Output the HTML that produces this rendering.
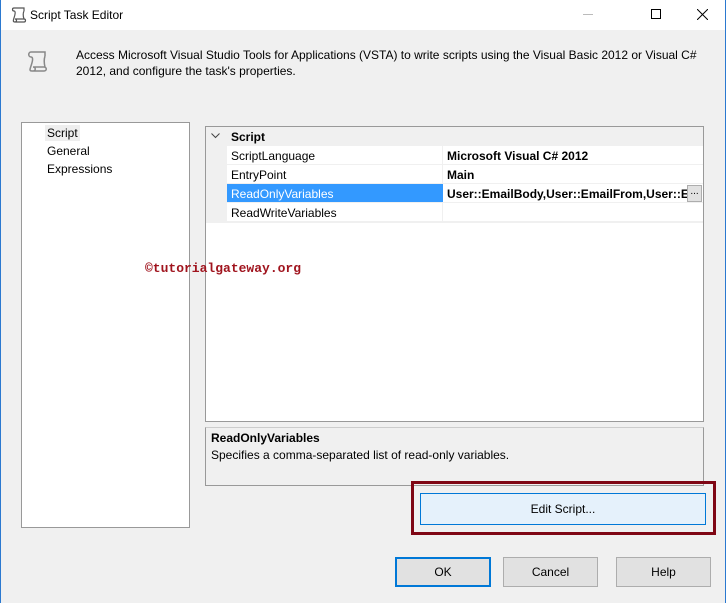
<!DOCTYPE html><html><head><style>
*{margin:0;padding:0;box-sizing:border-box}
body{width:726px;height:603px;background:#f0f0f0;font-family:"Liberation Sans",sans-serif;font-size:12px;color:#000;position:relative;overflow:hidden}
.a{position:absolute}
.t{white-space:nowrap}
.btn{position:absolute;background:#e1e1e1;border:1px solid #adadad;text-align:center;line-height:28px;font-size:12px}
</style></head><body>
<div class="a" style="left:0;top:0;width:1px;height:603px;background:#2b79d0"></div>
<div class="a" style="left:725px;top:0;width:1px;height:603px;background:#2b79d0"></div>
<div class="a" style="left:1px;top:0;width:724px;height:30px;background:#fff"></div>
<svg class="a" style="left:9px;top:6px" width="18" height="18" viewBox="0 0 18 18"><path d="M5 2h10v3M5 2c-2 0-2 3 0 3s1 4 0 7-1 4 1 4h9c2 0 2-3 0-3M6 16c2 0 2-3 0-3h9c-1-3-1-6 0-8" fill="none" stroke="#555" stroke-width="1.2"/></svg>
<div class="a t" style="left:30px;top:8px;font-size:12px">Script Task Editor</div>
<div class="a" style="left:583px;top:14px;width:10px;height:1px;background:#bbb"></div>
<div class="a" style="left:651px;top:9px;width:10px;height:10px;border:1px solid #000"></div>
<svg class="a" style="left:697px;top:9px" width="11" height="11"><path d="M0 0L11 11M11 0L0 11" stroke="#000" stroke-width="1"/></svg>
<svg class="a" style="left:25px;top:50px" width="24" height="24" viewBox="0 0 24 24"><path d="M6 2h14v4M6 2c-3 0-3 5 0 5s1 6 0 9-2 5 1 5h12c3 0 3-4 0-4M8 21c3 0 3-4 0-4h12c-1-4-1-8 0-11" fill="none" stroke="#888" stroke-width="1.5"/></svg>
<div class="a" style="left:76px;top:47px;line-height:16px;width:645px">Access Microsoft Visual Studio Tools for Applications (VSTA) to write scripts using the Visual Basic 2012 or Visual C# 2012, and configure the task's properties.</div>
<div class="a" style="left:21px;top:122px;width:169px;height:406px;background:#fff;border:1px solid #999"></div>
<div class="a t" style="left:45px;top:125px;background:#eee;padding:0 2px;line-height:16px">Script</div>
<div class="a t" style="left:47px;top:143px;line-height:16px">General</div>
<div class="a t" style="left:47px;top:161px;line-height:16px">Expressions</div>
<div class="a" style="left:205px;top:126px;width:499px;height:296px;background:#fff;border:1px solid #999"></div>
<div class="a" style="left:206px;top:127px;width:497px;height:96px;background:#f0f0f0"></div>
<svg class="a" style="left:211px;top:133px" width="9" height="6"><path d="M0.5 0.5L4.5 4.5L8.5 0.5" fill="none" stroke="#444"/></svg>
<div class="a t" style="left:231px;top:129px;font-weight:bold;line-height:16px">Script</div>
<div class="a" style="left:227px;top:146px;width:476px;height:76px;background:#fff"></div>
<div class="a" style="left:227px;top:146px;width:216px;height:76px;border-right:1px solid #f0f0f0"></div>
<div class="a" style="left:227px;top:164px;width:476px;height:1px;background:#f0f0f0"></div>
<div class="a" style="left:227px;top:183px;width:476px;height:1px;background:#f0f0f0"></div>
<div class="a" style="left:227px;top:202px;width:476px;height:1px;background:#f0f0f0"></div>
<div class="a" style="left:227px;top:221px;width:476px;height:1px;background:#f0f0f0"></div>
<div class="a" style="left:227px;top:184px;width:216px;height:18px;background:#3399ff"></div>
<div class="a t" style="left:231px;top:148px;line-height:16px">ScriptLanguage</div>
<div class="a t" style="left:231px;top:167px;line-height:16px">EntryPoint</div>
<div class="a t" style="left:231px;top:186px;line-height:16px;color:#fff">ReadOnlyVariables</div>
<div class="a t" style="left:231px;top:205px;line-height:16px">ReadWriteVariables</div>
<div class="a t" style="left:447px;top:148px;line-height:16px;font-weight:bold">Microsoft Visual C# 2012</div>
<div class="a t" style="left:447px;top:167px;line-height:16px;font-weight:bold">Main</div>
<div class="a t" style="left:447px;top:186px;line-height:16px;font-weight:bold;width:240px;overflow:hidden">User::EmailBody,User::EmailFrom,User::EmailTo</div>
<div class="a" style="left:687px;top:185px;width:15px;height:17px;background:#e1e1e1;border:1px solid #adadad;font-size:10px;text-align:center;line-height:12px">...</div>
<div class="a t" style="left:145px;top:261px;font-family:'Liberation Mono',monospace;font-weight:bold;font-size:13px;color:#a0141e">©tutorialgateway.org</div>
<div class="a" style="left:205px;top:427px;width:499px;height:59px;border:1px solid #999;border-top:1px solid #ccc"></div>
<div class="a t" style="left:211px;top:430px;font-weight:bold;line-height:16px">ReadOnlyVariables</div>
<div class="a t" style="left:211px;top:447px;line-height:16px">Specifies a comma-separated list of read-only variables.</div>
<div class="a" style="left:411px;top:481px;width:305px;height:54px;border:3px solid #7f0614"></div>
<div class="a" style="left:420px;top:493px;width:286px;height:32px;background:#e5f1fb;border:1px solid #0078d7;text-align:center;line-height:30px">Edit Script...</div>
<div class="btn" style="left:395px;top:557px;width:96px;height:30px;border:2px solid #0078d7;line-height:26px">OK</div>
<div class="btn" style="left:503px;top:557px;width:95px;height:30px">Cancel</div>
<div class="btn" style="left:616px;top:557px;width:95px;height:30px">Help</div>
</body></html>
